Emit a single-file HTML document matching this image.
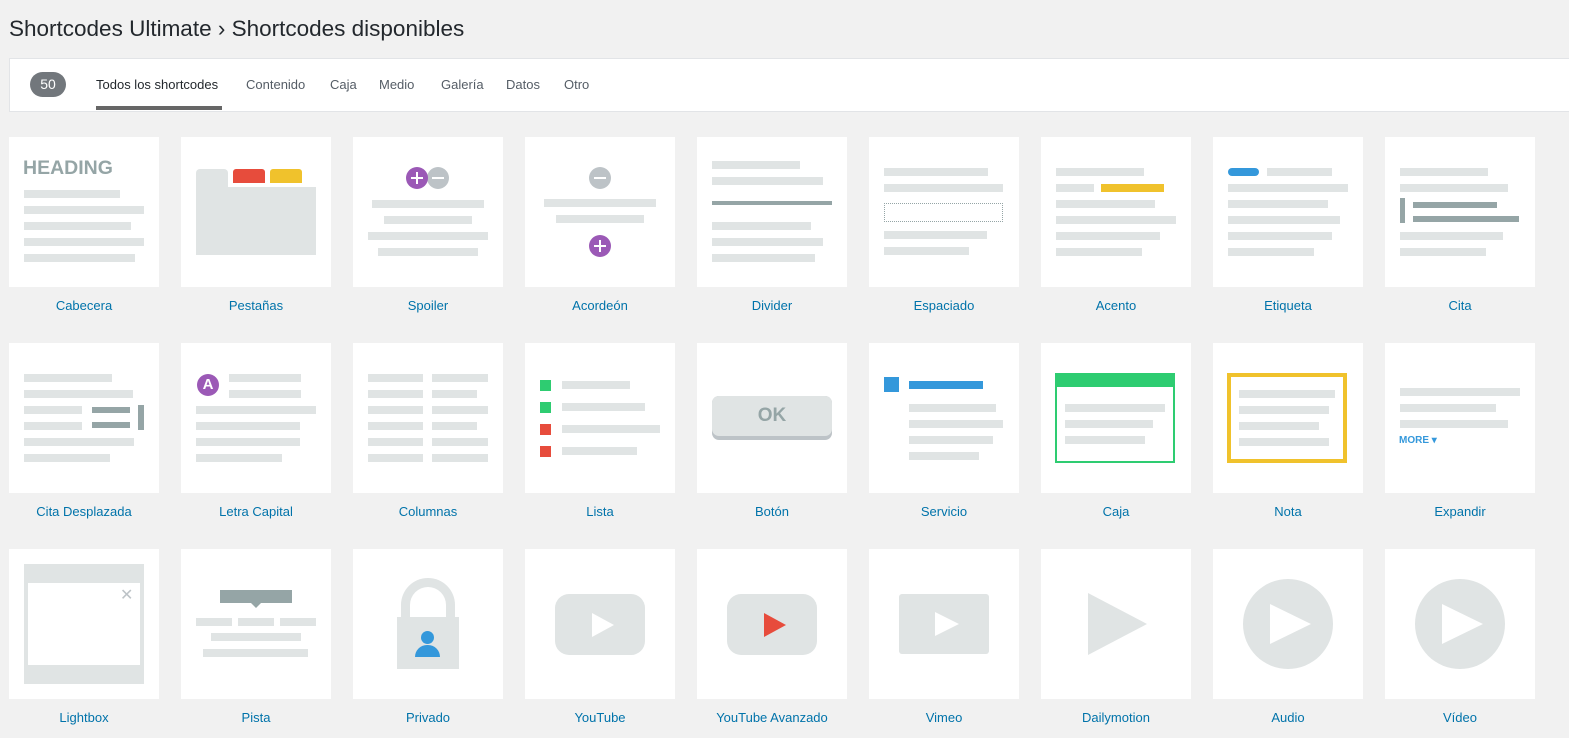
<!DOCTYPE html>
<html><head><meta charset="utf-8"><style>
*{margin:0;padding:0;box-sizing:border-box}
body{width:1569px;height:738px;background:#f1f1f1;font-family:"Liberation Sans",sans-serif;position:relative;overflow:hidden}
.a{position:absolute}
.c{position:absolute;width:150px;height:150px;background:#fff}
.b{position:absolute;height:8px;background:#e0e4e4}
.d{position:absolute;background:#95a5a6}
.l{position:absolute;width:150px;text-align:center;font-size:13px;color:#0073aa}
.t{position:absolute;top:77px;font-size:13px;color:#555d66}
.ci{position:absolute;width:22px;height:22px;border-radius:50%;color:#fff;font-size:15px;line-height:22px;text-align:center;font-weight:bold}
.ci.m::before,.ci.p::before,.ci.p::after{content:"";position:absolute;left:5px;top:10px;width:12px;height:2px;background:#fff}
.ci.p::after{left:10px;top:5px;width:2px;height:12px}
</style></head><body>
<div class="a" style="left:9px;top:16px;font-size:22.5px;color:#23282d">Shortcodes Ultimate › Shortcodes disponibles</div>
<div class="a" style="left:9px;top:58px;width:1570px;height:54px;background:#fff;border:1px solid #e2e4e7"></div>
<div class="a" style="left:30px;top:72px;width:36px;height:25px;border-radius:13px;background:#72777c;color:#fff;font-size:14px;text-align:center;line-height:25px">50</div>
<div class="t" style="left:96px;color:#23282d">Todos los shortcodes</div>
<div class="a" style="left:96px;top:106px;width:126px;height:4px;background:#666"></div>
<div class="t" style="left:246px">Contenido</div>
<div class="t" style="left:330px">Caja</div>
<div class="t" style="left:379px">Medio</div>
<div class="t" style="left:441px">Galería</div>
<div class="t" style="left:506px">Datos</div>
<div class="t" style="left:564px">Otro</div>

<!-- Row 1 -->
<div class="c" style="left:9px;top:137px">
<div class="a" style="left:14px;top:20px;font-size:19.5px;font-weight:bold;color:#95a5a6">HEADING</div>
<div class="b" style="left:15px;top:53px;width:96px"></div><div class="b" style="left:15px;top:69px;width:120px"></div><div class="b" style="left:15px;top:85px;width:107px"></div><div class="b" style="left:15px;top:101px;width:120px"></div><div class="b" style="left:15px;top:117px;width:111px"></div>
</div>
<div class="c" style="left:181px;top:137px">
<div class="a" style="left:15px;top:32px;width:32px;height:30px;background:#e0e4e4;border-radius:4px 4px 0 0"></div>
<div class="a" style="left:15px;top:50px;width:120px;height:68px;background:#e0e4e4"></div>
<div class="a" style="left:52px;top:32px;width:32px;height:14px;background:#e74c3c;border-radius:3px 3px 0 0"></div>
<div class="a" style="left:89px;top:32px;width:32px;height:14px;background:#f0c22c;border-radius:3px 3px 0 0"></div>
</div>
<div class="c" style="left:353px;top:137px">
<div class="ci m" style="left:74px;top:30px;background:#bdc3c7"></div>
<div class="ci p" style="left:53px;top:30px;background:#9b59b6"></div>
<div class="b" style="left:19px;top:63px;width:112px"></div><div class="b" style="left:31px;top:79px;width:88px"></div><div class="b" style="left:15px;top:95px;width:120px"></div><div class="b" style="left:25px;top:111px;width:100px"></div>
</div>
<div class="c" style="left:525px;top:137px">
<div class="ci m" style="left:64px;top:30px;background:#bdc3c7"></div>
<div class="b" style="left:19px;top:62px;width:112px"></div><div class="b" style="left:31px;top:78px;width:88px"></div>
<div class="ci p" style="left:64px;top:98px;background:#9b59b6"></div>
</div>
<div class="c" style="left:697px;top:137px">
<div class="b" style="left:15px;top:24px;width:88px"></div><div class="b" style="left:15px;top:40px;width:111px"></div>
<div class="d" style="left:15px;top:64px;width:120px;height:4px"></div>
<div class="b" style="left:15px;top:85px;width:99px"></div><div class="b" style="left:15px;top:101px;width:111px"></div><div class="b" style="left:15px;top:117px;width:103px"></div>
</div>
<div class="c" style="left:869px;top:137px">
<div class="b" style="left:15px;top:31px;width:104px"></div><div class="b" style="left:15px;top:47px;width:119px"></div>
<div class="a" style="left:15px;top:66px;width:119px;height:19px;border:1px dotted #95a5a6"></div>
<div class="b" style="left:15px;top:94px;width:103px"></div><div class="b" style="left:15px;top:110px;width:85px"></div>
</div>
<div class="c" style="left:1041px;top:137px">
<div class="b" style="left:15px;top:31px;width:88px"></div><div class="b" style="left:15px;top:47px;width:38px"></div>
<div class="a" style="left:60px;top:47px;width:63px;height:8px;background:#f0c22c"></div>
<div class="b" style="left:15px;top:63px;width:99px"></div><div class="b" style="left:15px;top:79px;width:120px"></div><div class="b" style="left:15px;top:95px;width:104px"></div><div class="b" style="left:15px;top:111px;width:86px"></div>
</div>
<div class="c" style="left:1213px;top:137px">
<div class="a" style="left:15px;top:31px;width:31px;height:8px;border-radius:4px;background:#3498db"></div>
<div class="b" style="left:54px;top:31px;width:65px"></div>
<div class="b" style="left:15px;top:47px;width:120px"></div><div class="b" style="left:15px;top:63px;width:100px"></div><div class="b" style="left:15px;top:79px;width:112px"></div><div class="b" style="left:15px;top:95px;width:104px"></div><div class="b" style="left:15px;top:111px;width:86px"></div>
</div>
<div class="c" style="left:1385px;top:137px">
<div class="b" style="left:15px;top:31px;width:88px"></div><div class="b" style="left:15px;top:47px;width:108px"></div>
<div class="d" style="left:15px;top:61px;width:5px;height:25px"></div>
<div class="d" style="left:28px;top:65px;width:84px;height:6px"></div><div class="d" style="left:28px;top:79px;width:106px;height:6px"></div>
<div class="b" style="left:15px;top:95px;width:103px"></div><div class="b" style="left:15px;top:111px;width:86px"></div>
</div>
<div class="l" style="left:9px;top:298px">Cabecera</div>
<div class="l" style="left:181px;top:298px">Pestañas</div>
<div class="l" style="left:353px;top:298px">Spoiler</div>
<div class="l" style="left:525px;top:298px">Acordeón</div>
<div class="l" style="left:697px;top:298px">Divider</div>
<div class="l" style="left:869px;top:298px">Espaciado</div>
<div class="l" style="left:1041px;top:298px">Acento</div>
<div class="l" style="left:1213px;top:298px">Etiqueta</div>
<div class="l" style="left:1385px;top:298px">Cita</div>

<!-- Row 2 -->
<div class="c" style="left:9px;top:343px">
<div class="b" style="left:15px;top:31px;width:88px"></div><div class="b" style="left:15px;top:47px;width:109px"></div><div class="b" style="left:15px;top:63px;width:58px"></div>
<div class="d" style="left:83px;top:64px;width:38px;height:6px"></div><div class="d" style="left:83px;top:79px;width:38px;height:6px"></div>
<div class="d" style="left:129px;top:62px;width:6px;height:25px"></div>
<div class="b" style="left:15px;top:79px;width:58px"></div><div class="b" style="left:15px;top:95px;width:110px"></div><div class="b" style="left:15px;top:111px;width:86px"></div>
</div>
<div class="c" style="left:181px;top:343px">
<div class="ci" style="left:16px;top:31px;background:#9b59b6">A</div>
<div class="b" style="left:48px;top:31px;width:72px"></div><div class="b" style="left:48px;top:47px;width:72px"></div>
<div class="b" style="left:15px;top:63px;width:120px"></div><div class="b" style="left:15px;top:79px;width:104px"></div><div class="b" style="left:15px;top:95px;width:104px"></div><div class="b" style="left:15px;top:111px;width:86px"></div>
</div>
<div class="c" style="left:353px;top:343px">
<div class="b" style="left:15px;top:31px;width:55px"></div><div class="b" style="left:79px;top:31px;width:56px"></div>
<div class="b" style="left:15px;top:47px;width:55px"></div><div class="b" style="left:79px;top:47px;width:45px"></div>
<div class="b" style="left:15px;top:63px;width:55px"></div><div class="b" style="left:79px;top:63px;width:56px"></div>
<div class="b" style="left:15px;top:79px;width:55px"></div><div class="b" style="left:79px;top:79px;width:45px"></div>
<div class="b" style="left:15px;top:95px;width:55px"></div><div class="b" style="left:79px;top:95px;width:56px"></div>
<div class="b" style="left:15px;top:111px;width:55px"></div><div class="b" style="left:79px;top:111px;width:56px"></div>
</div>
<div class="c" style="left:525px;top:343px">
<div class="a" style="left:15px;top:37px;width:11px;height:11px;background:#2ecc71"></div><div class="b" style="left:37px;top:38px;width:68px"></div>
<div class="a" style="left:15px;top:59px;width:11px;height:11px;background:#2ecc71"></div><div class="b" style="left:37px;top:60px;width:83px"></div>
<div class="a" style="left:15px;top:81px;width:11px;height:11px;background:#e74c3c"></div><div class="b" style="left:37px;top:82px;width:98px"></div>
<div class="a" style="left:15px;top:103px;width:11px;height:11px;background:#e74c3c"></div><div class="b" style="left:37px;top:104px;width:75px"></div>
</div>
<div class="c" style="left:697px;top:343px">
<div class="a" style="left:15px;top:53px;width:120px;height:44px;border-radius:7px;background:#bdc3c7"></div>
<div class="a" style="left:15px;top:53px;width:120px;height:40px;border-radius:7px;background:#e0e4e4;color:#95a5a6;font-weight:bold;font-size:19px;text-align:center;line-height:40px">OK</div>
</div>
<div class="c" style="left:869px;top:343px">
<div class="a" style="left:15px;top:34px;width:15px;height:15px;background:#3498db"></div>
<div class="a" style="left:40px;top:38px;width:74px;height:8px;background:#3498db"></div>
<div class="b" style="left:40px;top:61px;width:87px"></div><div class="b" style="left:40px;top:77px;width:94px"></div><div class="b" style="left:40px;top:93px;width:84px"></div><div class="b" style="left:40px;top:109px;width:70px"></div>
</div>
<div class="c" style="left:1041px;top:343px">
<div class="a" style="left:14px;top:30px;width:120px;height:90px;border:2px solid #2ecc71;border-top:14px solid #2ecc71"></div>
<div class="b" style="left:24px;top:61px;width:100px"></div><div class="b" style="left:24px;top:77px;width:88px"></div><div class="b" style="left:24px;top:93px;width:80px"></div>
</div>
<div class="c" style="left:1213px;top:343px">
<div class="a" style="left:14px;top:30px;width:120px;height:90px;border:4px solid #f0c22c"></div>
<div class="b" style="left:26px;top:47px;width:96px"></div><div class="b" style="left:26px;top:63px;width:90px"></div><div class="b" style="left:26px;top:79px;width:80px"></div><div class="b" style="left:26px;top:95px;width:90px"></div>
</div>
<div class="c" style="left:1385px;top:343px">
<div class="b" style="left:15px;top:45px;width:120px"></div><div class="b" style="left:15px;top:61px;width:96px"></div><div class="b" style="left:15px;top:77px;width:108px"></div>
<div class="a" style="left:14px;top:92px;font-size:10px;font-weight:bold;color:#3498db">MORE ▾</div>
</div>
<div class="l" style="left:9px;top:504px">Cita Desplazada</div>
<div class="l" style="left:181px;top:504px">Letra Capital</div>
<div class="l" style="left:353px;top:504px">Columnas</div>
<div class="l" style="left:525px;top:504px">Lista</div>
<div class="l" style="left:697px;top:504px">Botón</div>
<div class="l" style="left:869px;top:504px">Servicio</div>
<div class="l" style="left:1041px;top:504px">Caja</div>
<div class="l" style="left:1213px;top:504px">Nota</div>
<div class="l" style="left:1385px;top:504px">Expandir</div>

<!-- Row 3 -->
<div class="c" style="left:9px;top:549px">
<div class="a" style="left:15px;top:15px;width:120px;height:120px;background:#e0e4e4"></div>
<div class="a" style="left:19px;top:34px;width:112px;height:82px;background:#fff"></div>
<div class="a" style="left:111px;top:36px;font-size:16px;color:#bdc3c7">✕</div>
</div>
<div class="c" style="left:181px;top:549px">
<div class="d" style="left:39px;top:41px;width:72px;height:13px"></div>
<div class="a" style="left:70px;top:54px;width:0;height:0;border:5px solid transparent;border-top-color:#95a5a6"></div>
<div class="b" style="left:15px;top:69px;width:36px"></div><div class="b" style="left:57px;top:69px;width:36px"></div><div class="b" style="left:99px;top:69px;width:36px"></div>
<div class="b" style="left:30px;top:84px;width:90px"></div><div class="b" style="left:22px;top:100px;width:105px"></div>
</div>
<div class="c" style="left:353px;top:549px">
<div class="a" style="left:48px;top:29px;width:54px;height:60px;border:9px solid #e0e4e4;border-radius:27px 27px 0 0;border-bottom:none"></div>
<div class="a" style="left:44px;top:68px;width:62px;height:52px;background:#e0e4e4"></div>
<div class="a" style="left:68px;top:82px;width:13px;height:13px;border-radius:50%;background:#3498db"></div>
<div class="a" style="left:62px;top:96px;width:25px;height:12px;border-radius:12px 12px 0 0;background:#3498db"></div>
</div>
<div class="c" style="left:525px;top:549px">
<div class="a" style="left:30px;top:45px;width:90px;height:61px;border-radius:14px;background:#e0e4e4"></div>
<div class="a" style="left:67px;top:64px;border-left:22px solid #fff;border-top:12px solid transparent;border-bottom:12px solid transparent"></div>
</div>
<div class="c" style="left:697px;top:549px">
<div class="a" style="left:30px;top:45px;width:90px;height:61px;border-radius:14px;background:#e0e4e4"></div>
<div class="a" style="left:67px;top:64px;border-left:22px solid #e74c3c;border-top:12px solid transparent;border-bottom:12px solid transparent"></div>
</div>
<div class="c" style="left:869px;top:549px">
<div class="a" style="left:30px;top:45px;width:90px;height:60px;border-radius:3px;background:#e0e4e4"></div>
<div class="a" style="left:66px;top:63px;border-left:24px solid #fff;border-top:12px solid transparent;border-bottom:12px solid transparent"></div>
</div>
<div class="c" style="left:1041px;top:549px">
<div class="a" style="left:47px;top:44px;border-left:59px solid #e0e4e4;border-top:31px solid transparent;border-bottom:31px solid transparent"></div>
</div>
<div class="c" style="left:1213px;top:549px">
<div class="a" style="left:30px;top:30px;width:90px;height:90px;border-radius:50%;background:#e0e4e4"></div>
<div class="a" style="left:57px;top:55px;border-left:41px solid #fff;border-top:20px solid transparent;border-bottom:20px solid transparent"></div>
</div>
<div class="c" style="left:1385px;top:549px">
<div class="a" style="left:30px;top:30px;width:90px;height:90px;border-radius:50%;background:#e0e4e4"></div>
<div class="a" style="left:57px;top:55px;border-left:41px solid #fff;border-top:20px solid transparent;border-bottom:20px solid transparent"></div>
</div>
<div class="l" style="left:9px;top:710px">Lightbox</div>
<div class="l" style="left:181px;top:710px">Pista</div>
<div class="l" style="left:353px;top:710px">Privado</div>
<div class="l" style="left:525px;top:710px">YouTube</div>
<div class="l" style="left:697px;top:710px">YouTube Avanzado</div>
<div class="l" style="left:869px;top:710px">Vimeo</div>
<div class="l" style="left:1041px;top:710px">Dailymotion</div>
<div class="l" style="left:1213px;top:710px">Audio</div>
<div class="l" style="left:1385px;top:710px">Vídeo</div>
</body></html>
